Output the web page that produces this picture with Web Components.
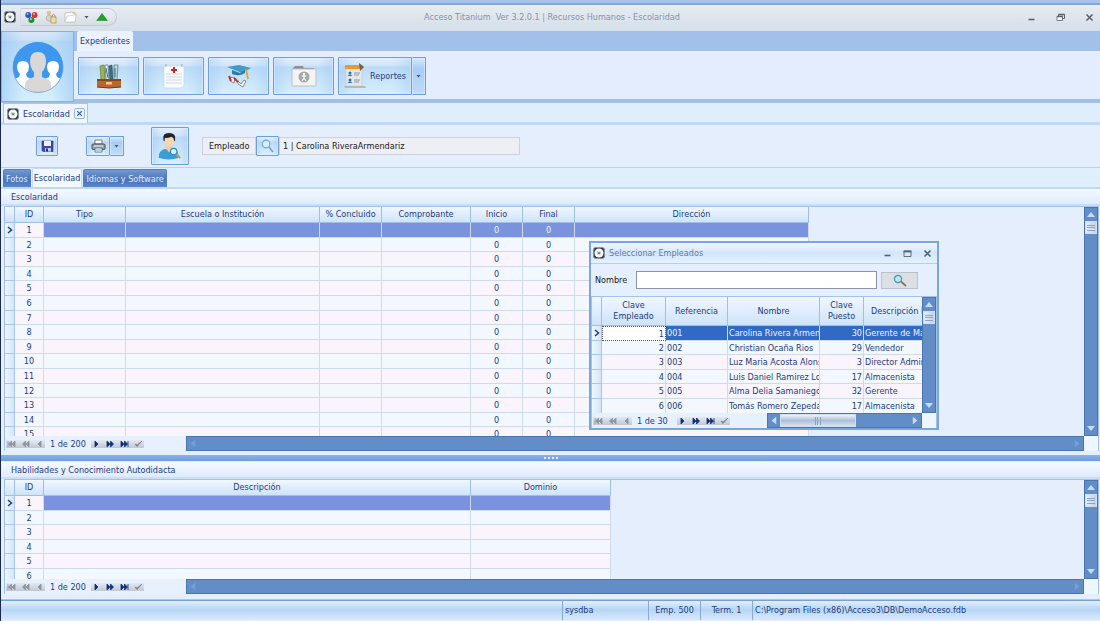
<!DOCTYPE html>
<html lang="es">
<head>
<meta charset="utf-8">
<title>Acceso Titanium</title>
<style>
    html, body {
        height: 100%;
        margin: 0;
    }

    body {
        font: 9px/14px "DejaVu Sans Condensed", "DejaVu Sans", sans-serif;
        color: #1d3c80;
        background: #e5eefd;
        overflow: hidden;
        --bar: #628dc6;
    }
</style>
</head>
<body>
<titanium-app></titanium-app>

<script>
(function (){
    const icons = {
        app: `<svg width="12" height="12" viewBox="0 0 13 13"><rect x=".5" y=".5" width="12" height="12" rx="2.500" fill="#343a42" stroke="#8b929b"/><circle cx="6.5" cy="6.5" r="4.900" fill="#fafafa"/><circle cx="6.5" cy="6.5" r="2.800" fill="#dfe2e5"/><path d="M4.500 5l2 1.800L8 6" fill="none" stroke="#777" stroke-width=".8"/><circle cx="6.5" cy="6.8" r=".8" fill="#333"/></svg>`,
        balls: `<svg width="13" height="13" viewBox="0 0 13 13"><circle cx="3.2" cy="4" r="2.9" fill="#2a55c8"/><circle cx="2.6" cy="3" r="1" fill="#a9c4ff"/><circle cx="9.6" cy="4" r="2.9" fill="#d2352c"/><circle cx="9" cy="3" r="1" fill="#ffb8b0"/><circle cx="6.4" cy="9" r="3" fill="#1d9136"/><circle cx="5.9" cy="8" r="1" fill="#a5efb0"/></svg>`,
        userKey: `<svg width="12" height="14" viewBox="0 0 12 14"><circle cx="4" cy="3" r="2.3" fill="#e3c49a"/><path d="M1 9q0-4 3-4t3 4v2H3z" fill="#d9d2c6" stroke="#a99a84" stroke-width=".5"/><rect x="6" y="7" width="5" height="6" fill="#efdfa7" stroke="#aa8c4b" stroke-width=".7"/><path d="M7 7V5.500q1.500-2 3 0V7" fill="none" stroke="#a5906a"/></svg>`,
        folder: `<svg width="13" height="12" viewBox="0 0 13 12"><path d="M1 2l8-1 1 2 2 0-1 8H1z" fill="#fcfcfa" stroke="#b9b9b4" stroke-width=".8"/><path d="M1 11l2-6 9-1-1 7z" fill="#fff" stroke="#c8c8c4" stroke-width=".7"/><path d="M8 2q3-2 4 1" fill="none" stroke="#e3bd7e"/></svg>`,
        down: `<svg width="5" height="3" viewBox="0 0 5 3"><path d="M.5 0h4L2.500 2.500z" fill="#41546e"/></svg>`,
        green: `<svg width="12" height="8" viewBox="0 0 13 9"><path d="M.5 8.500L6.500.500l6 8z" fill="#20a12c" stroke="#137b20" stroke-width=".6"/></svg>`,
        min: `<svg width="9" height="9" viewBox="0 0 9 9"><path d="M1.500 6.500h6" stroke="currentColor" stroke-width="1.600"/></svg>`,
        restore: `<svg width="9" height="9" viewBox="0 0 9 9"><path d="M2.500 3V1.500h6v4H7" fill="none" stroke="currentColor"/><path d="M1 3.500h5.500v4H1z" fill="#fff" stroke="currentColor" stroke-width=".8"/><path d="M1 3.500h6M2.500 1.500h6" stroke="currentColor" stroke-width="1.300"/></svg>`,
        max: `<svg width="9" height="9" viewBox="0 0 9 9"><path d="M1 2h7v5.500H1z" fill="none" stroke="currentColor" stroke-width=".9"/><path d="M.6 2.500h7.800" stroke="currentColor" stroke-width="1.800"/></svg>`,
        close: `<svg width="9" height="9" viewBox="0 0 9 9"><path d="M1.500 1.500l6 6M7.500 1.500l-6 6" stroke="currentColor" stroke-width="1.600"/></svg>`,
        people: `<svg width="52" height="52" viewBox="0 0 52 52"><defs><clipPath id="c"><circle cx="26" cy="26" r="25"/></clipPath></defs><circle cx="26" cy="26.500" r="25.500" fill="#8fa9c7"/><g clip-path="url(#c)"><rect width="52" height="52" fill="#3d97ee"/><path d="M1 52V41q1-3 6-5l1-3q-3-3-3-7 0-6 6-6t6 6q0 4-3 7l1 3q5 2 6 5v11z" fill="#fff"/><path d="M31 52V41q1-3 6-5l1-3q-3-3-3-7 0-6 6-6t6 6q0 4-3 7l1 3q5 2 6 5v11z" fill="#fff"/><path d="M13 52v-9q0-4 9-7v-5q-4-4-4-11 0-9 8-9t8 9q0 7-4 11v5q9 3 9 7v9z" fill="#d9d8d9"/></g></svg>`,
        files: `<svg width="26" height="26" viewBox="0 0 26 26"><path d="M4 3l4-1 1 15H5z" fill="#9cb84c" stroke="#4f6c2b" stroke-width=".6"/><path d="M9 2l3 0 1 15h-3z" fill="#e9f1f2" stroke="#4d6d78" stroke-width=".7"/><path d="M13 3l3-1 1 15h-3z" fill="#3d6f84" stroke="#27485a" stroke-width=".6"/><path d="M18 2l4 0-1 15h-3z" fill="#b9d9dc" stroke="#47777c" stroke-width=".7"/><path d="M10 5l2 10M19 5v9" stroke="#45626e"/><path d="M1 16h24v8q-12 2-24 0z" fill="#b5672e"/><path d="M1 16h24v2H1z" fill="#8c4518"/><path d="M1 24q12 2 24 0" fill="none" stroke="#74370f"/><rect x="10" y="19" width="6" height="2.500" rx="1" fill="#f1cb9b"/></svg>`,
        medical: `<svg width="24" height="26" viewBox="0 0 24 26"><path d="M2 3h20v20l-3 2H2z" fill="#fafbfd" stroke="#ccd6e4" stroke-width=".7"/><path d="M4 11h16M4 14h16M4 17h16M4 20h16" stroke="#d0d9e6"/><path d="M12 4v6M9 7h6" stroke="#d5202b" stroke-width="2"/><path d="M4 1v3M20 1v3" stroke="#9ba8b8"/></svg>`,
        school: `<svg width="26" height="24" viewBox="0 0 26 24"><path d="M1 3l12-2 12 3-9 5z" fill="#3f9bc8"/><path d="M6 6v4q7 3 13-1V6l-5 3z" fill="#2f7ba8"/><path d="M20 5l2 10" stroke="#d8aa3a" stroke-width="1.800"/><path d="M4 13l5 1-1 5-4-2zM12 17l3 3 3-4 2 1-3 6-5-3z" fill="#f6f6f2" stroke="#77716e" stroke-width=".8"/><path d="M3 12l2 5M8 14l4 4" stroke="#c42f39" stroke-width="2"/></svg>`,
        travel: `<svg width="26" height="22" viewBox="0 0 26 22"><path d="M2 3l2-2h8l1 2h10v3H2z" fill="#8f9092"/><rect x="1" y="4" width="24" height="17" rx="1" fill="#f3f4f6" stroke="#bcc1c9"/><circle cx="13" cy="12" r="5.500" fill="#a4a6a8"/><circle cx="13" cy="9" r="1.200" fill="#fff"/><path d="M13 10v3l-2 3M13 13l2 3M10.500 11h5" fill="none" stroke="#fff" stroke-width="1.100"/></svg>`,
        report: `<svg width="22" height="26" viewBox="0 0 22 26"><path d="M2 4h16v19H2z" fill="#e5e8ea" stroke="#c3c8cc" stroke-width=".6"/><path d="M1 2h14V0l5 4-4 4V6H1z" fill="#e99a2e"/><path d="M15 0l5 4-4 4z" fill="#6a6459"/><circle cx="6" cy="10" r="1.500" fill="#2b6fad"/><path d="M3.500 13q2.500-3 5 0zM3.500 20q2.500-3 5 0z" fill="#2b6fad"/><circle cx="6" cy="17" r="1.500" fill="#2b6fad"/><path d="M10 10h6M10 12h5M10 17h6M10 19h5" stroke="#8c979f"/><path d="M0 23h21l1 2H1z" fill="#b7b9bb"/></svg>`,
        save: `<svg width="13" height="12" viewBox="0 0 13 12"><path d="M1 1h11v10.500H2L1 10.500z" fill="#4145a4" stroke="#2a2d80" stroke-width=".6"/><rect x="3" y="1" width="7" height="5" fill="#eef1fb"/><rect x="4" y="8" width="6" height="3.500" fill="#c3c7e3"/><rect x="5" y="8.500" width="2" height="3" fill="#2a2d80"/></svg>`,
        print: `<svg width="15" height="14" viewBox="0 0 15 14"><path d="M4 1h7v4H4z" fill="#fff" stroke="#555f6c" stroke-width=".8"/><rect x="1" y="5" width="13" height="5.500" rx="1" fill="#9aa3ad" stroke="#39414c" stroke-width=".9"/><path d="M3 7h9" stroke="#e6f4f8"/><path d="M4 9h7v4H4z" fill="#fff" stroke="#555f6c" stroke-width=".8"/><path d="M5 11h5" stroke="#4ab2dc"/></svg>`,
        person: `<svg width="24" height="28" viewBox="0 0 26 30"><path d="M1 28q-1-8 7-10l4 2 4-2q5 1 6 6l0 4q-10 3-21 0z" fill="#3a9fd8"/><path d="M8 17l4 5 4-5-1-3H9z" fill="#f4cba3"/><ellipse cx="12" cy="9.500" rx="5" ry="6" fill="#f8d5ae"/><path d="M6 9Q4 1 12 1q8 0 6.500 8l-1 1q0-4-3-5-5 2-7 1L7 10z" fill="#20242c"/><circle cx="17" cy="21" r="3.500" fill="#d8f1ff" stroke="#2d88c0" stroke-width="1.300"/><path d="M20 24l4 4" stroke="#c89c3f" stroke-width="2.400"/></svg>`,
        lens: `<svg width="13" height="14" viewBox="0 0 13 14"><circle cx="5" cy="5" r="3.800" fill="#d9f0fc" stroke="#6aa5d3" stroke-width="1.200"/><path d="M8 8l4 5" stroke="#8b9cb0" stroke-width="1.800"/></svg>`,
        lensDark: `<svg width="14" height="13" viewBox="0 0 14 13"><circle cx="5" cy="5" r="3.600" fill="#b8e6f3" stroke="#4c93ad" stroke-width="1.200"/><path d="M8 7.500l5 4.500" stroke="#8c7a51" stroke-width="1.800"/></svg>`
    };

    // Arrows of the record navigator, drawn on a 9x8 box.
    const navigatorPaths = {
        first: "M1 1v6M4.500 1L1.500 4l3 3zM8 1L5 4l3 3z",
        back: "M4.500 1L1.500 4l3 3zM8 1L5 4l3 3z",
        prior: "M6 1L3 4l3 3z",
        next: "M3 1l3 3-3 3z",
        forward: "M1 1l3 3-3 3zM4.500 1l3 3-3 3z",
        last: "M1 1l3 3-3 3zM4.500 1l3 3-3 3zM8 1v6",
        post: "M1 4l2 2.500L8 1 3 5z"
    };

    function register(name, html, setup) {
        const template = document.createElement("template");
        template.innerHTML = html.replace(/\{icon:(\w+)\}/g, (match, key) => icons[key]);

        customElements.define(name, class extends HTMLElement {
            constructor() {
                super();

                this.attachShadow({ mode: "open" });
                this.shadowRoot.appendChild(template.content.cloneNode(true));
            }

            connectedCallback() {
                if(setup)
                    setup(this, this.shadowRoot);
            }
        });
    }

    const reset = `
        * {
            box-sizing: border-box;
        }

        svg {
            display: block;
            flex: none;
        }

        button {
            display: flex;
            align-items: center;
            justify-content: center;
            margin: 0;
            padding: 0;
            border: 0;
            background: none;
            font: inherit;
            color: inherit;
        }
    `;

    register("window-buttons", `
    <style>${reset}
        :host { display: flex; gap: var(--button-gap, 20px); color: #5a626e; }
        button { width: 9px; height: 12px; }
        .restore { display: none; }
        :host([restored]) .restore { display: flex; }
        :host([restored]) .max { display: none; }
    </style>
    <button aria-label="Minimizar">{icon:min}</button>
    <button class="restore" aria-label="Restaurar">{icon:restore}</button>
    <button class="max" aria-label="Maximizar">{icon:max}</button>
    <button aria-label="Cerrar">{icon:close}</button>
    `);

    register("title-bar", `
    <style>${reset}
        :host {
            display: flex;
            align-items: center;
            height: 31px;
            padding: 0 6px 0 3px;
            box-sizing: border-box;
            border-top: 3px solid #a5c5ee;
            background: linear-gradient(#86a6d0 2px, #e8ecf2 2px, #dce4ed 60%, #d4dfeb);
        }
        .pill {
            display: flex;
            align-items: center;
            gap: 7px;
            height: 18px;
            width: 97px;
            margin-left: 4px;
            padding-left: 4px;
            border: 1px solid #c3cad3;
            border-left-color: #d8dde4;
            border-radius: 2px 9px 9px 2px;
            background: linear-gradient(#eceff3, #d8dde4);
        }
        h1 {
            flex: 1;
            margin: 0;
            padding-right: 40px;
            font-size: 9px;
            font-weight: normal;
            text-align: center;
            color: #8793a8;
            white-space: pre;
        }
    </style>
    {icon:app}
    <div class="pill">
        <button aria-label="Módulos">{icon:balls}</button>
        <button aria-label="Usuario">{icon:userKey}</button>
        <button aria-label="Abrir">{icon:folder}</button>
        <button aria-label="Más">{icon:down}</button>
        <button aria-label="Subir">{icon:green}</button>
    </div>
    <h1><slot></slot></h1>
    <window-buttons restored></window-buttons>
    `);

    register("tool-button", `
    <style>${reset}
        :host { display: flex; width: 61px; height: 38px; }
        button {
            border: 1px solid #6d9edb;
            border-radius: 1px;
            background: linear-gradient(90deg, #9cc8f466, transparent 25%, transparent 75%, #9cc8f466),
                linear-gradient(#e2effc, #d2e5f9 20%, #bcdbf7 26%, #d6effd);
            box-shadow: inset 0 0 0 1px #e0f0fd88;
        }
        .main { flex: 1; gap: 4px; }
        .drop { display: none; width: 14px; border-left: 0; background: linear-gradient(#d8e9fb, #a9cdf3 30%, #bfdcf7); }
        :host([split]) .drop { display: flex; }
    </style>
    <button class="main"><slot></slot></button>
    <button class="drop" aria-label="Opciones">{icon:down}</button>
    `, (host, root) => {
        if(host.hasAttribute("icon"))
            root.querySelector(".main").insertAdjacentHTML("afterbegin", icons[host.getAttribute("icon")]);
        if(host.hasAttribute("label"))
            root.querySelector(".main").setAttribute("aria-label", host.getAttribute("label"));
    });

    register("ribbon-bar", `
    <style>${reset}
        :host { display: flex; height: 72px; border-bottom: 4px solid #a1c1e4; box-sizing: border-box; background: #e4edfd; }
        .avatar {
            width: 73px;
            height: 71px;
            border: 1px solid #84b1e7;
            background: linear-gradient(90deg, #9cc8f499, transparent 30%, transparent 70%, #9cc8f499),
                linear-gradient(#dae8f8, #c9e0f6 12%, #b9dbf7 13%, #d4effd);
        }
        .body { flex: 1; }
        .tabs { display: flex; height: 20px; padding-left: 3px; background: #a3c0ea; }
        .tabs button { padding: 0 3px; border-radius: 2px 2px 0 0; background: #e9f2fe; }
        .tools { display: flex; gap: 4px; padding: 6px 4px; }
        .reports { width: 88px; }
    </style>
    <button class="avatar" aria-label="Personal">{icon:people}</button>
    <div class="body">
        <div class="tabs"><button>Expedientes</button></div>
        <div class="tools">
            <tool-button icon="files" label="Archivo"></tool-button>
            <tool-button icon="medical" label="Historial médico"></tool-button>
            <tool-button icon="school" label="Estudios"></tool-button>
            <tool-button icon="travel" label="Viajes"></tool-button>
            <tool-button class="reports" icon="report" split>Reportes</tool-button>
        </div>
    </div>
    `);

    register("document-tabs", `
    <style>${reset}
        :host { display: flex; height: 22px; padding-left: 2px; box-sizing: border-box; border-bottom: 3px solid #c1d7f3; background: #deeefd; }
        .tab {
            display: flex;
            align-items: center;
            height: 20px;
            gap: 4px;
            padding: 0 2px 0 3px;
            border: 1px solid #a9c5ea;
            border-bottom: 0;
            background: #eef5fe;
        }
        .close { width: 11px; height: 11px; border: 1px solid #97b7e2; border-radius: 2px; color: #385f9e; }
        .close svg { width: 7px; height: 7px; }
    </style>
    <div class="tab">{icon:app}<span><slot></slot></span><button class="close" aria-label="Cerrar pestaña">{icon:close}</button></div>
    `);

    register("employee-toolbar", `
    <style>${reset}
        :host {
            display: flex;
            align-items: center;
            height: 43px;
            padding-left: 35px;
            box-sizing: border-box;
            border-bottom: 1px solid #b9d2ef;
            background: #e5eefd;
        }
        .save { width: 22px; height: 20px; }
        .print { width: 38px; height: 20px; margin-left: 28px; }
        .person { width: 38px; height: 38px; margin-left: 27px; }
        label, input {
            height: 18px;
            border: 1px solid #cbd2de;
            background: #eeeff5;
            font: inherit;
            line-height: 16px;
            color: #16181f;
        }
        label { width: 54px; margin-left: 13px; padding-left: 6px; }
        .lens { width: 23px; height: 20px; }
        input { width: 241px; padding: 0 3px; outline: 0; }
    </style>
    <tool-button class="save" icon="save" label="Guardar"></tool-button>
    <tool-button class="print" icon="print" label="Imprimir" split></tool-button>
    <tool-button class="person" icon="person" label="Buscar persona"></tool-button>
    <label for="employee">Empleado</label>
    <tool-button class="lens" icon="lens" label="Buscar"></tool-button>
    <input id="employee" type="text" readonly value="1 | Carolina RiveraArmendariz">
    `);

    register("page-tabs", `
    <style>${reset}
        :host {
            display: flex;
            align-items: flex-end;
            gap: 1px;
            height: 21px;
            padding-left: 2px;
            box-sizing: border-box;
            border-bottom: 2px solid #c0d7f3;
            background: #dfeffd;
        }
        button {
            height: 18px;
            padding: 0 2px;
            border: 1px solid #5580bf;
            border-bottom: 0;
            border-radius: 2px 2px 0 0;
            background: linear-gradient(#7299d2, #4a73b8 60%, #5b87c8);
            color: #e3edfc;
        }
        .active { height: 19px; padding: 0 1px; border-color: #c5d9f3; background: #f3f8ff; color: #1d3c80; }
    </style>
    <button>Fotos</button>
    <button class="active">Escolaridad</button>
    <button>Idiomas y Software</button>
    `);

    register("scroll-bar", `
    <style>${reset}
        :host {
            display: flex;
            flex-direction: column;
            align-items: center;
            width: 14px;
            box-sizing: border-box;
            border: 1px solid #4975b2;
            background: var(--bar);
            color: #c5dcf5;
        }
        button { flex: none; width: 12px; height: 13px; }
        .thumb { background: linear-gradient(90deg, #e4effb, #c0d3ea); border: 1px solid #cfe0f4; }
        .end { margin-top: auto; }
        .grip { width: 8px; height: 6px; border: solid #8ba5c6; border-width: 1px 0; background: linear-gradient(#8ba5c6, #8ba5c6) 0 50% / 8px 1px no-repeat; }
        :host([horizontal]) { flex-direction: row; width: auto; height: 15px; }
        :host([horizontal]) .end { margin: 0 0 0 auto; }
        :host([horizontal]) button { height: 13px; }
        :host([horizontal]) .arrow svg { transform: rotate(-90deg); }
        :host([horizontal]) .thumb { width: 76px; background: linear-gradient(#eef3fa, #aebfd5 50%, #d4e4f4); }
        :host([horizontal]) .grip { transform: rotate(90deg); }
        :host([disabled]) .thumb { display: none; }
        :host([disabled]) { color: #75a0d6; }
    </style>
    <button class="arrow" aria-label="Anterior"><svg width="8" height="5" viewBox="0 0 8 5"><path d="M0 5h8L4 0z" fill="currentColor"/></svg></button>
    <button class="thumb" aria-label="Desplazar"><span class="grip"></span></button>
    <button class="arrow end" aria-label="Siguiente"><svg width="8" height="5" viewBox="0 0 8 5"><path d="M0 0h8L4 5z" fill="currentColor"/></svg></button>
    `);

    register("record-navigator", `
    <style>${reset}
        :host { display: flex; align-items: center; height: 15px; padding-left: 1px; }
        .group { display: flex; gap: 5px; height: 8px; padding: 0 1px; background: linear-gradient(#e3e9f2, #c2c8d1); color: #8d949f; }
        .group.on { color: #0e2f77; }
        .post { color: #7c838d; }
        span { min-width: 45px; padding: 0 5px; white-space: nowrap; }
        button { width: 9px; height: 8px; }
        svg { width: 9px; height: 8px; }
    </style>
    <div class="group"></div>
    <span><slot></slot></span>
    <div class="group on"></div>
    `, (host, root) => {
        const groups = root.querySelectorAll(".group");

        Object.entries(navigatorPaths).forEach(([name, path], index) => {
            const button = document.createElement("button");
            button.className = name;
            button.setAttribute("aria-label", name);
            button.innerHTML = `<svg viewBox="0 0 9 8"><path d="${path}" fill="currentColor" stroke="currentColor" stroke-width=".8"/></svg>`;
            groups[index < 3 ? 0 : 1].appendChild(button);
        });
    });

    /* Columns and rows come from fillGrid(). */
    register("data-grid", `
    <style>${reset}
        :host { display: grid; grid-template: minmax(0, 1fr) 15px / minmax(0, 1fr) 14px; min-height: 0; border: 1px solid #a4c2e8; border-bottom: 0; }
        .view { overflow: hidden; background: #e5eefd; }
        table { border-collapse: separate; border-spacing: 0; table-layout: fixed; }
        th, td {
            padding: 0 1px;
            border: solid #cfdbed;
            border-width: 0 1px 1px 0;
            font-weight: normal;
            line-height: 12px;
            overflow: hidden;
            white-space: nowrap;
        }
        th {
            height: var(--head-height, 16px);
            border-color: #9fbfe6;
            background: linear-gradient(#f0f7ff, #dcebfc 60%, #cde3fa);
            text-align: center;
            line-height: 11px;
            white-space: pre;
        }
        td { height: 15px; text-align: center; background: #faf4fd; }
        tr:nth-child(5n + 2) td, tr:nth-child(5n + 4) td { height: 14px; }
        tr:nth-child(even) td { background: #f2f8fe; }
        tr td.mark, tr td.mark:first-child { padding: 0; border-color: #a9c5ea; background: linear-gradient(90deg, #eff6ff, #d3e5fa); }
        .mark svg { margin: auto; }
        td.left { text-align: left; }
        td.right { text-align: right; }
        tr.selected td.picked { background: var(--selected, #7b93de); color: #eef3ff; }
        :host([focus-cell]) tr.selected td:nth-child(2) { border: 1px dotted #555; background: #fff; }
        .foot { display: flex; justify-content: space-between; background: #e7f1fe; }
        .foot scroll-bar { width: var(--scroll-width, calc(100% - 181px)); }
        .corner { background: #eef6ff; }
    </style>
    <div class="view"><table><colgroup></colgroup><thead><tr></tr></thead><tbody></tbody></table></div>
    <scroll-bar></scroll-bar>
    <div class="foot"><record-navigator><slot></slot></record-navigator><scroll-bar class="across" horizontal></scroll-bar></div>
    <div class="corner"></div>
    `);

    function fillGrid(grid, columns, rows) {
        const root = grid.shadowRoot;
        const all = [{ title: "", width: 10 }, ...columns];
        const arrow = `<svg width="6" height="8" viewBox="0 0 6 8"><path d="M1 1l3.500 3L1 7" fill="none" stroke="#1d3c80" stroke-width="1.500"/></svg>`;

        root.querySelector("table").style.width = all.reduce((sum, column) => sum + column.width, 0) + "px";
        root.querySelector("colgroup").innerHTML = all.map(column => `<col style="width: ${column.width}px">`).join("");
        root.querySelector("thead tr").innerHTML = all.map(column => `<th>${column.title}</th>`).join("");
        root.querySelector("tbody").innerHTML = rows.map((row, number) => {
            const cells = row.map((value, index) => `<td class="${columns[index].align || ""} ${index ? "picked" : ""}">${value}</td>`);
            return `<tr class="${number ? "" : "selected"}"><td class="mark">${number ? "" : arrow}</td>${cells.join("")}</tr>`;
        }).join("");
        root.querySelector(".across").toggleAttribute("disabled", !grid.hasAttribute("focus-cell"));
    }

    function numberedRows(count, rest) {
        return Array.from({ length: count }, (item, index) => [index + 1, ...rest]);
    }

    register("grid-pane", `
    <style>${reset}
        :host { display: flex; flex-direction: column; min-height: 0; padding: 0 1px 0 3px; }
        h2 {
            flex: none;
            height: 17px;
            margin: 0 -1px 0 -3px;
            padding: 1px 0 0 10px;
            border-bottom: 2px solid #cadef5;
            background: linear-gradient(#f4f9ff, #dfebfc);
            font-size: 9px;
            font-weight: normal;
            line-height: 14px;
        }
        ::slotted(data-grid) { flex: 1; }
    </style>
    <h2></h2>
    <slot></slot>
    `, (host, root) => {
        root.querySelector("h2").textContent = host.getAttribute("caption");
    });

    register("status-bar", `
    <style>${reset}
        :host {
            display: flex;
            height: 20px;
            box-sizing: border-box;
            border-top: 1px solid #7ba0d0;
            background: linear-gradient(#e2eefc, #b7d5f5 45%, #d8e9fc);
            line-height: 19px;
        }
        span { padding: 0 2px; border-left: 1px solid #86aad8; white-space: nowrap; }
        .blank { flex: 1; border: 0; }
        .user { width: 86px; }
        .cell { width: 52px; text-align: center; }
        .path { width: 348px; }
    </style>
    <span class="blank"></span>
    <span class="user">sysdba</span>
    <span class="cell">Emp. 500</span>
    <span class="cell">Term. 1</span>
    <span class="path">C:\\Program Files (x86)\\Acceso3\\DB\\DemoAcceso.fdb</span>
    `);

    register("employee-dialog", `
    <style>${reset}
        :host {
            display: flex;
            flex-direction: column;
            box-sizing: border-box;
            border: 2px solid #7ba6d9;
            background: #e5effd;
            --head-height: 29px;
            --selected: #316ac5;
            --scroll-width: 155px;
        }
        header {
            display: flex;
            align-items: center;
            height: 21px;
            gap: 4px;
            padding: 0 5px 0 2px;
            border-bottom: 1px solid #b5cfee;
            background: linear-gradient(#f0f7ff, #d3e5fa 50%, #e2f2fe);
            color: #64799c;
            --button-gap: 11px;
        }
        header span { flex: 1; }
        .search { display: flex; align-items: center; height: 32px; gap: 4px; padding: 0 19px 0 4px; color: #16181f; }
        label { width: 37px; }
        input { flex: 1; height: 18px; border: 1px solid #8a94a3; background: #fff; font: inherit; }
        .search button { width: 37px; height: 17px; border: 1px solid #b9c2cd; background: #dcdfe3; }
        data-grid { flex: 1; }
    </style>
    <header>{icon:app}<span>Seleccionar Empleados</span><window-buttons></window-buttons></header>
    <div class="search">
        <label for="name">Nombre</label>
        <input id="name" type="text">
        <button aria-label="Buscar">{icon:lensDark}</button>
    </div>
    <data-grid focus-cell>1 de 30</data-grid>
    `, (host, root) => {
        fillGrid(root.querySelector("data-grid"), [
            { title: "Clave\nEmpleado", width: 64, align: "right" },
            { title: "Referencia", width: 62, align: "left" },
            { title: "Nombre", width: 92, align: "left" },
            { title: "Clave\nPuesto", width: 44, align: "right" },
            { title: "Descripción Puesto", width: 92, align: "left" }
        ], [
            [1, "001", "Carolina Rivera Armendariz", 30, "Gerente de Marketing"],
            [2, "002", "Christian Ocaña Rios", 29, "Vendedor"],
            [3, "003", "Luz Maria Acosta Alonso", 3, "Director Administrativo"],
            [4, "004", "Luis Daniel Ramirez Lorenzo", 17, "Almacenista"],
            [5, "005", "Alma Delia Samaniego Vega", 32, "Gerente"],
            [6, "006", "Tomás Romero Zepeda", 17, "Almacenista"]
        ]);
    });

    register("titanium-app", `
    <style>${reset}
        :host { display: flex; flex-direction: column; height: 100vh; padding-bottom: 1px; box-sizing: border-box; border-left: 1px solid #1b2a4b; }
        title-bar, ribbon-bar, document-tabs, employee-toolbar, page-tabs, status-bar { flex: none; }
        .studies { flex: 1 1 0; }
        .skills { flex: 0 0 132px; }
        .splitter { display: flex; justify-content: center; align-items: center; gap: 2px; height: 6px; margin: 4px 0 1px; background: linear-gradient(#8db2e6, #6f9dda); }
        .splitter i { width: 2px; height: 2px; background: #e5f0ff; }
        .edge { height: 6px; border-bottom: 1px solid #a9c5ea; }
        employee-dialog { position: absolute; left: 589px; top: 241px; width: 350px; height: 189px; }
    </style>
    <title-bar>Acceso Titanium  Ver 3.2.0.1 | Recursos Humanos - Escolaridad</title-bar>
    <ribbon-bar></ribbon-bar>
    <document-tabs>Escolaridad</document-tabs>
    <employee-toolbar></employee-toolbar>
    <page-tabs></page-tabs>
    <grid-pane class="studies" caption="Escolaridad"><data-grid id="studies">1 de 200</data-grid></grid-pane>
    <div class="splitter"><i></i><i></i><i></i><i></i></div>
    <grid-pane class="skills" caption="Habilidades y Conocimiento Autodidacta"><data-grid id="skills">1 de 200</data-grid></grid-pane>
    <div class="edge"></div>
    <status-bar></status-bar>
    <employee-dialog></employee-dialog>
    `, (host, root) => {
        fillGrid(root.getElementById("studies"), [
            { title: "ID", width: 29 },
            { title: "Tipo", width: 82 },
            { title: "Escuela o Institución", width: 194 },
            { title: "% Concluido", width: 62 },
            { title: "Comprobante", width: 89 },
            { title: "Inicio", width: 52 },
            { title: "Final", width: 52 },
            { title: "Dirección", width: 234 }
        ], numberedRows(15, ["", "", "", "", 0, 0, ""]));

        fillGrid(root.getElementById("skills"), [
            { title: "ID", width: 29 },
            { title: "Descripción", width: 427 },
            { title: "Dominio", width: 140 }
        ], numberedRows(6, ["", ""]));
    });
})();
</script>
</body>
</html>
